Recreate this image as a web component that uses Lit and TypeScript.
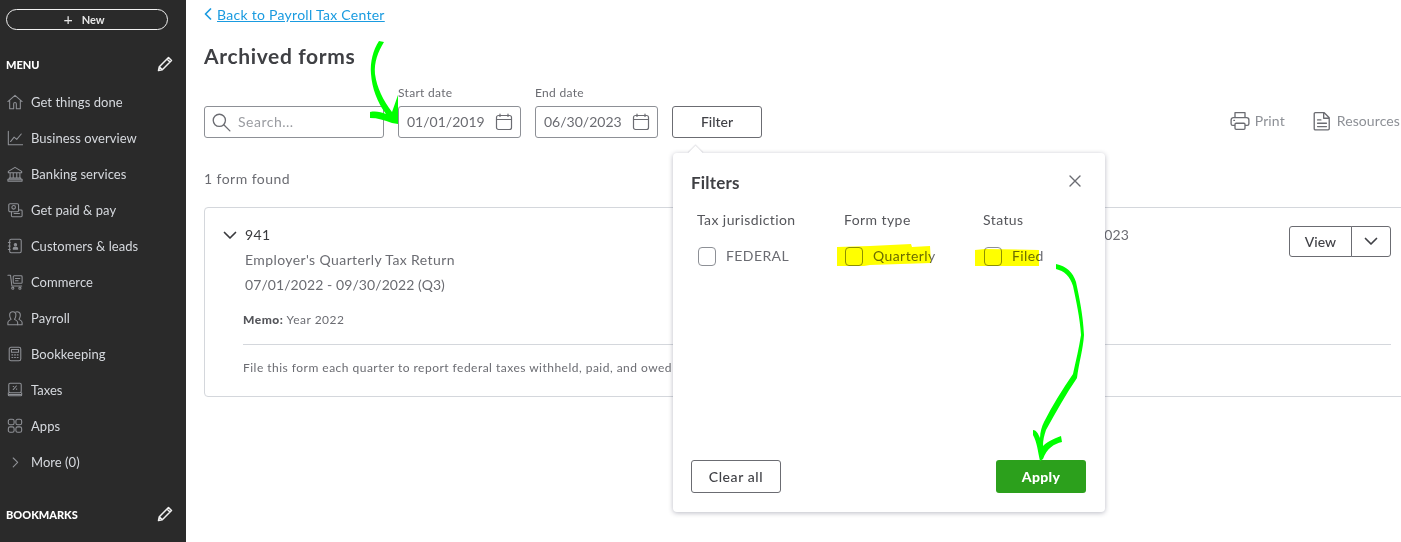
import { LitElement, html, css, svg } from "lit";
import { customElement } from "lit/decorators.js";

const ic = (body: unknown, size = 18, vb = 18) =>
  html`<svg class="ic" width=${size} height=${size} viewBox="0 0 ${vb} ${vb}" fill="none" stroke="currentColor" stroke-width="1.2" stroke-linecap="round" stroke-linejoin="round">${body}</svg>`;

const nav = [
  ["Get things done", svg`<path d="M1 8.500 9 1.500l8 7M3 7v9.500h4.500V11a1.500 1.500 0 0 1 3 0v5.500H15V7"/>`],
  ["Business overview", svg`<path d="M1.500 1.500v15h16M4 13l4-5 3 2.500 5-6"/>`],
  ["Banking services", svg`<path d="M1.500 6 9 1.500 16.500 6v1.500h-15zM3.500 7.500v6M7 7.500v6M11 7.500v6M14.500 7.500v6M2.500 13.500h13v1.500h-13zM1 15h16v2H1z"/>`],
  ["Get paid & pay", svg`<rect x="2" y="2" width="11" height="9" rx="1.500"/><circle cx="7.500" cy="6" r="2"/><path d="M5 11v4.500a1 1 0 0 0 1 1h10a1 1 0 0 0 1-1V10a1 1 0 0 0-1-1h-3M8 13h6"/>`],
  ["Customers & leads", svg`<rect x="3" y="1.500" width="13" height="15" rx="1.500"/><path d="M1.500 5h2M1.500 9h2M1.500 13h2"/><circle cx="9.500" cy="7.500" r="1.300" fill="currentColor"/><path d="M7 12.500c0-3 5-3 5 0z" fill="currentColor"/>`],
  ["Commerce", svg`<path d="M1 1.500h3l1.500 12h11"/><rect x="7" y="2" width="10" height="8.500" rx="1"/><path d="M9.500 5h5M9.500 7.500h3"/><circle cx="6.500" cy="16" r="1.200"/><circle cx="14.500" cy="16" r="1.200"/>`],
  ["Payroll", svg`<path d="M1 16.500v-2.500c0-1.800 2-2.500 3.500-3.500C3.500 9 3 7.500 3 5.500a3.500 3.500 0 0 1 7 0c0 2-.5 3.500-1.500 5C10 11.500 12 12.200 12 14v2.500z"/><path d="M10 2.300a3.500 3.500 0 0 1 5 3.200c0 2-.5 3.500-1.500 5 1.500 1 3.500 1.700 3.500 3.500v2.500h-5"/>`],
  ["Bookkeeping", svg`<rect x="2.500" y="1.500" width="13" height="15" rx="2"/><rect x="5" y="4" width="8" height="3"/><path d="M5.500 10h1M8.500 10h1M11.500 10h1M5.500 13h1M8.500 13h1M11.500 13h1"/>`],
  ["Taxes", svg`<rect x="2" y="1.500" width="14" height="10.500" rx="1.500"/><path d="M7 8.500l3.500-4M7 5h.5M10.500 8h.5M1.500 12v2.500a1 1 0 0 0 1 1h13a1 1 0 0 0 1-1V12M2.500 14h13"/>`],
  ["Apps", svg`<rect x="1.500" y="1.500" width="6.500" height="6" rx="2"/><rect x="10" y="1.500" width="6.500" height="6" rx="2"/><rect x="1.500" y="10" width="6.500" height="6" rx="2"/><rect x="10" y="10" width="6.500" height="6" rx="2"/>`],
  ["More (0)", svg`<path d="M7 4.500 12 9.500 7 14.500"/>`],
];

const pencil = html`<svg class="pencil" width="16" height="16" viewBox="0 0 16 16" fill="none" stroke="currentColor" stroke-width="1.500" stroke-linejoin="round"><path d="M1.500 14.500l.8-3.800L11.500 1.500l3 3-9.200 9.200zM10 3l3 3M2.300 10.700l3 3"/></svg>`;
const cal = ic(svg`<rect x="1.500" y="2.500" width="15" height="14" rx="2"/><path d="M1.500 6.500h15M5 1v2.500M13 1v2.500"/>`);
const chev = html`<svg width="14" height="9" viewBox="0 0 14 9" fill="none" stroke="currentColor" stroke-width="1.700" stroke-linecap="round" stroke-linejoin="round"><path d="M1.500 1.500 7 7l5.500-5.500"/></svg>`;

@customElement("app-root")
export class AppRoot extends LitElement {
  static styles = css`
    :host { display: flex; width: 1401px; height: 542px; overflow: hidden; position: relative; background: #fff;
      font-family: "Lato", "Liberation Sans", sans-serif; color: #393a3d; font-size: 14px; }
    * { box-sizing: border-box; }
    .side { width: 186px; flex: none; background: #2a2a2a; color: #d9dbdf; padding: 9px 14px 0 6px; display: flex; flex-direction: column; }
    .new { height: 21px; width: 162px; padding-right: 6px; padding-bottom: 1px; border: 1px solid #f1f1f1; border-radius: 11px; display: flex; align-items: center; justify-content: center; gap: 9px; color: #e6e6e6; font-size: 11px; font-weight: 700; }
    .new b { font-size: 16px; font-weight: 400; line-height: 1; }
    .hd { display: flex; justify-content: space-between; align-items: center; color: #fff; font-size: 11px; font-weight: 900; height: 16px; }
    .hd.m { margin-top: 26px; margin-bottom: 12px; }
    .hd.b { margin-top: 26px; }
    .pencil { color: #f0f0f0; margin-right: -1px; }
    .item { height: 36px; display: flex; align-items: center; gap: 8px; padding-left: 1px; padding-bottom: 1px; font-size: 13px; letter-spacing: .04px; color: #d6d9de; }
    .item .ic { color: #8f9196; flex: none; width: 16px; height: 16px; }
    .main { flex: 1; min-width: 0; position: relative; padding: 5px 0 0 18px; }
    .back { display: flex; align-items: center; gap: 5px; height: 18px; color: #1a9be0; font-size: 14px; letter-spacing: .28px; }
    .back span { text-decoration: underline; }
    h1 { margin: 19px 0 0; font-size: 21px; line-height: 28px; font-weight: 700; color: #3f4044; letter-spacing: .65px; }
    .bar { display: flex; align-items: flex-end; gap: 14px; margin-top: 16px; margin-right: 1px; }
    .field { display: flex; flex-direction: column; gap: 6px; }
    .field label { font-size: 12px; line-height: 14px; color: #6b6c72; letter-spacing: .3px; }
    .input { height: 32px; padding-bottom: 1px; border: 1px solid #8d9096; border-radius: 3px; display: flex; align-items: center; color: #6b6c72; font-size: 14px; }
    .search { width: 180px; padding-left: 6px; gap: 7px; color: #9a9ca1; letter-spacing: .5px; }
    .search .ic { color: #6b6c72; flex: none; }
    .date { width: 123px; padding: 0 7px 1px 8px; justify-content: space-between; letter-spacing: 0; }
    .btn { height: 32px; padding-bottom: 1px; border: 1px solid #6b6c72; border-radius: 3px; display: flex; align-items: center; justify-content: center; font-size: 14px; font-weight: 500; color: #404146; background: #fff; }
    .filter { width: 90px; }
    .acts { margin-left: auto; display: flex; gap: 27px; height: 32px; padding-bottom: 3px; align-items: center; color: #8d9096; font-size: 14px; letter-spacing: .1px; white-space: nowrap; }
    .act { display: flex; align-items: center; gap: 5px; }
    .act .ic { color: #6b6c72; }
    .found { margin-top: 31px; font-size: 14px; line-height: 20px; color: #6b6c72; letter-spacing: .45px; }
    .card { margin-top: 18px; margin-right: -12px; height: 190px; border: 1px solid #d4d7dc; border-radius: 4px; padding: 18px 21px 0 18px; display: flex; flex-direction: column; }
    .top { display: flex; justify-content: space-between; height: 110px; }
    .info { flex: 1; }
    .code { display: flex; align-items: center; gap: 8px; font-size: 14px; line-height: 18px; color: #393a3d; letter-spacing: .4px; }
    .name, .line { margin-left: 22px; line-height: 25px; font-size: 14px; color: #6b6c72; }
    .name { margin-top: 3px; letter-spacing: .4px; }
    .line { letter-spacing: .08px; }
    .memo { margin: 14px 0 0 20px; font-size: 12px; line-height: 18px; color: #6b6c72; letter-spacing: .5px; }
    .memo b { color: #55565b; font-weight: 900; }
    .filed { margin: 0 160px 0 0; font-size: 14px; line-height: 18px; color: #6b6c72; letter-spacing: .1px; }
    .split { display: flex; }
    .view { width: 63px; height: 31px; border-radius: 3px 0 0 3px; }
    .more { width: 40px; height: 31px; margin-left: -1px; border-radius: 0 3px 3px 0; }
    hr { margin: 8px 0 0 20px; border: 0; border-top: 1px solid #d4d7dc; }
    .desc { margin: 15px 0 0 20px; font-size: 12px; line-height: 16px; color: #6b6c72; letter-spacing: .48px; white-space: nowrap; }
    .pop { position: absolute; left: 487px; top: 153px; width: 432px; height: 359px; background: #fff; border-radius: 4px; box-shadow: 0 1px 5px rgba(40,44,70,.32); padding: 19px 19px 19px 18px; display: flex; flex-direction: column; }
    .pop::before { content: ""; position: absolute; left: 17px; top: -5px; width: 11px; height: 11px; background: #fff; transform: rotate(45deg); box-shadow: -1px -1px 1px rgba(40,44,70,.12); }
    .phd { position: relative; display: flex; justify-content: space-between; align-items: center; height: 20px; }
    .phd h2 { margin: 0; font-size: 17px; font-weight: 700; color: #3f4044; letter-spacing: .2px; }
    .phd svg { color: #6b6c72; margin-right: 5px; margin-top: -2px; }
    .cols { display: grid; grid-template-columns: 147px 139px 1fr; padding-left: 6px; margin-top: 19px; flex: 1; }
    .col h3 { margin: 0 0 17px; font-size: 14px; font-weight: 400; line-height: 18px; color: #55565b; letter-spacing: .42px; }
    .chk { display: flex; align-items: center; gap: 10px; font-size: 14px; color: #6b6c72; letter-spacing: .42px; line-height: 20px; }
    .chk i { width: 18px; height: 19px; margin-left: 1px; border: 1px solid #8d9096; border-radius: 4px; flex: none; }
    .foot { display: flex; justify-content: space-between; }
    .clear { width: 90px; height: 33px; letter-spacing: .6px; }
    .apply { width: 90px; height: 33px; background: #2ca01c; border: 0; color: #fff; font-weight: 900; letter-spacing: .3px; }
    .ink { position: absolute; inset: 0; width: 1401px; height: 542px; pointer-events: none; }
    .hl { mix-blend-mode: multiply; }
  `;

  render() {
    return html`
      <aside class="side">
        <div class="new"><b>+</b><span>New</span></div>
        <div class="hd m"><span>MENU</span>${pencil}</div>
        ${nav.map(([t, p]) => html`<div class="item">${ic(p)}<span>${t}</span></div>`)}
        <div class="hd b"><span>BOOKMARKS</span>${pencil}</div>
      </aside>
      <main class="main">
        <div class="back"><svg width="8" height="12" viewBox="0 0 8 12" fill="none" stroke="currentColor" stroke-width="1.700" stroke-linecap="round" stroke-linejoin="round"><path d="M6.500 1 1.500 6l5 5"/></svg><span>Back to Payroll Tax Center</span></div>
        <h1>Archived forms</h1>
        <div class="bar">
          <div class="input search">${ic(svg`<circle cx="7.500" cy="7.500" r="5.500"/><path d="M11.500 11.500 17 17"/>`, 20)}<span>Search...</span></div>
          <div class="field"><label>Start date</label><div class="input date"><span>01/01/2019</span>${cal}</div></div>
          <div class="field"><label>End date</label><div class="input date"><span>06/30/2023</span>${cal}</div></div>
          <div class="btn filter">Filter</div>
          <div class="acts">
            <div class="act">${ic(svg`<path d="M4.500 6V1.500h9V6M4 13H2.500A1.500 1.500 0 0 1 1 11.500V8a2 2 0 0 1 2-2h12a2 2 0 0 1 2 2v3.500a1.500 1.500 0 0 1-1.500 1.500H14"/><rect x="4.500" y="11" width="9" height="5.500" rx="1"/><path d="M3.500 8.500h.5"/>`, 20)}<span>Print</span></div>
            <div class="act">${ic(svg`<path d="M3 1.500h8l4.500 4.500v10a1 1 0 0 1-1 1H3a1 1 0 0 1-1-1v-13.500a1 1 0 0 1 1-1zM10.500 1.500v5h5M5 8h3M5 11h8M5 14h8"/>`, 20)}<span>Resources</span></div>
          </div>
        </div>
        <div class="found">1 form found</div>
        <section class="card">
          <div class="top">
            <div class="info">
              <div class="code">${chev}<span>941</span></div>
              <div class="name">Employer's Quarterly Tax Return</div>
              <div class="line">07/01/2022 - 09/30/2022 (Q3)</div>
              <div class="memo"><b>Memo:</b> Year 2022</div>
            </div>
            <div class="filed">01/31/2023</div>
            <div class="split"><div class="btn view">View</div><div class="btn more">${chev}</div></div>
          </div>
          <hr />
          <div class="desc">File this form each quarter to report federal taxes withheld, paid, and owed</div>
        </section>
        <div class="pop">
          <div class="phd"><h2>Filters</h2><svg width="12" height="12" viewBox="0 0 12 12" fill="none" stroke="currentColor" stroke-width="1.400" stroke-linecap="round"><path d="M1 1l10 10M11 1 1 11"/></svg></div>
          <div class="cols">
            <div class="col"><h3>Tax jurisdiction</h3><div class="chk"><i></i>FEDERAL</div></div>
            <div class="col"><h3>Form type</h3><div class="chk"><i></i>Quarterly</div></div>
            <div class="col"><h3>Status</h3><div class="chk"><i></i>Filed</div></div>
          </div>
          <div class="foot"><div class="btn clear">Clear all</div><div class="btn apply">Apply</div></div>
        </div>
      </main>
      <svg class="ink" viewBox="0 0 1401 542">
        <path class="hl" fill="#ffff00" d="M837 247 L870 246 L911 244 L912 247 L930 246 L931 263 L870 265 L864 266 L837 266Z"/>
        <path class="hl" fill="#ffff00" d="M975 250 L985 249 L1039 250 L1039 266 L975 266Z"/>
        <g fill="#00ff00">
          <path d="M379 41 L384 42 C378 52 374 62 375 74 C377 88 383 100 392 112 L398 95 L398 124 L392 123 C384 120 378 118 370 118 L370 112 C376 111 381 112 386 114 C377 102 372 88 371 74 C370 62 373 50 379 41Z"/>
          <path d="M1056 264 C1066 266 1073 272 1076 282 C1079 296 1083 314 1084 335 C1083 350 1079 362 1077 378 C1066 394 1056 412 1046 430 C1044 436 1043 440 1043 446 C1046 443 1052 439 1061 436 L1062 442 C1054 444 1047 448 1043 459 L1040 461 C1038 452 1037 442 1033 435 L1033 430 C1036 430 1038 433 1040 438 C1040 432 1042 426 1044 422 C1052 406 1062 390 1073 374 C1076 360 1079 348 1081 335 C1080 318 1076 300 1073 286 C1070 276 1064 271 1056 269Z"/>
        </g>
      </svg>
    `;
  }
}
